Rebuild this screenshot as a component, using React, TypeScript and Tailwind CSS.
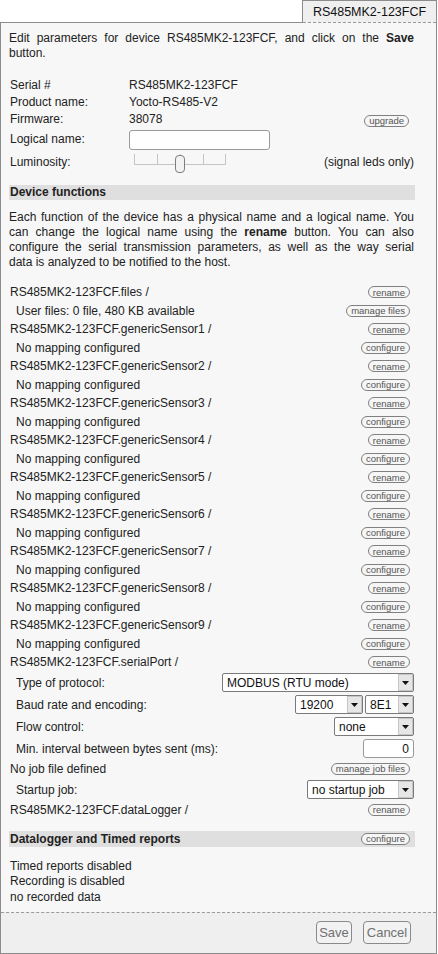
import React from "react";

function Pill({ children, className = "" }: { children: React.ReactNode; className?: string }) {
  return (
    <span
      className={
        "inline-flex h-[12px] items-center rounded-full border border-[#808080] bg-[#f6f6f6] px-[4px] text-[9.5px] leading-none text-[#555] " +
        className
      }
    >
      {children}
    </span>
  );
}

function Select({ className, value }: { className: string; value: string }) {
  return (
    <div className={"flex h-[19px] items-stretch rounded-[2px] border border-[#7a7a7a] bg-white " + className}>
      <span className="flex flex-1 items-center overflow-hidden whitespace-nowrap pl-[4px] text-[12px] leading-none text-[#111]">
        {value}
      </span>
      <span className="flex w-[15px] items-center justify-center border border-[#c6c6c6] bg-[#e6e6e6]">
        <svg width="7" height="4" viewBox="0 0 7 4">
          <path d="M0 0H7L3.5 4Z" fill="#111" />
        </svg>
      </span>
    </div>
  );
}

const functionRows: { text: string; btn: string; sub: boolean }[] = [
  { text: "RS485MK2-123FCF.files /", btn: "rename", sub: false },
  { text: "User files: 0 file, 480 KB available", btn: "manage files", sub: true },
  ...[1, 2, 3, 4, 5, 6, 7, 8, 9].flatMap((n) => [
    { text: `RS485MK2-123FCF.genericSensor${n} /`, btn: "rename", sub: false },
    { text: "No mapping configured", btn: "configure", sub: true },
  ]),
  { text: "RS485MK2-123FCF.serialPort /", btn: "rename", sub: false },
];

export default function App() {
  return (
    <div className="h-[954px] w-[438px] bg-white font-['Liberation_Sans',Arial,sans-serif] text-[12px] text-[#222]">
      {/* Tab */}
      <div className="flex h-[22px]">
        <div className="w-[302px]" />
        <div className="flex w-[135px] items-center justify-center border-x border-t border-[#8c8c8c] bg-[#efefef] pt-[1px] text-[12.5px] text-[#111]">
          RS485MK2-123FCF
        </div>
      </div>

      {/* Panel */}
      <div className="w-[437px] border-x border-b border-[#8c8c8c] bg-[#f7f7f7]">
        <div className="flex h-[1px]">
          <div className="w-[302px] bg-[#8c8c8c]" />
          <div className="flex-1 border-t border-dashed border-[#9a9a9a]" />
        </div>

        <div className="flex h-[889px] flex-col pl-[8px] pr-[21px]">
          {/* Intro */}
          <div className="mt-[8px] w-[405px] leading-[15px]">
            <div className="text-justify [text-align-last:justify]">
              Edit parameters for device RS485MK2-123FCF, and click on the <b>Save</b>
            </div>
            <div>button.</div>
          </div>

          {/* Info */}
          <div className="mt-[15px] flex flex-col">
            <div className="grid h-[17px] grid-cols-[120px_1fr] items-center">
              <span className="pl-[1px]">Serial #</span>
              <span>RS485MK2-123FCF</span>
            </div>
            <div className="grid h-[17px] grid-cols-[120px_1fr] items-center">
              <span className="pl-[1px]">Product name:</span>
              <span>Yocto-RS485-V2</span>
            </div>
            <div className="grid h-[17px] grid-cols-[120px_1fr] items-center">
              <span className="pl-[1px]">Firmware:</span>
              <span className="flex items-center justify-between">
                <span>38078</span>
                <Pill className="mr-[6px] mt-[3px]">upgrade</Pill>
              </span>
            </div>
            <div className="grid h-[24px] grid-cols-[120px_1fr] items-center">
              <span className="pl-[1px]">Logical name:</span>
              <span className="mt-[2px] h-[20px] w-[141px] rounded-[3px] border border-[#9a9a9a] bg-white" />
            </div>
            <div className="grid h-[21px] grid-cols-[120px_1fr] items-center">
              <span className="pl-[1px]">Luminosity:</span>
              <span className="flex items-center justify-between">
                <svg width="100" height="21" viewBox="0 0 100 21" className="overflow-visible">
                  <g stroke="#c4c4c4" strokeWidth="1" fill="none">
                    <path d="M5 13.5H97" />
                    <path d="M5.5 3V13.5M28.5 3V13.5M51.5 3V13.5M74.5 3V13.5M96.5 3V13.5" />
                  </g>
                  <rect x="46.5" y="4.5" width="9" height="17" rx="3.5" fill="#f2f2f2" stroke="#7d7d7d" />
                </svg>
                <span className="mr-[1px]">(signal leds only)</span>
              </span>
            </div>
          </div>

          {/* Device functions */}
          <div className="mt-[13px] h-[15px] bg-[#dfdfdf] pl-[1px] font-bold leading-[15px]">Device functions</div>

          <div className="mt-[10px] w-[405px] leading-[15px]">
            <div className="text-justify [text-align-last:justify]">
              Each function of the device has a physical name and a logical name. You
            </div>
            <div className="text-justify [text-align-last:justify]">
              can change the logical name using the <b>rename</b> button. You can also
            </div>
            <div className="text-justify [text-align-last:justify]">
              configure the serial transmission parameters, as well as the way serial
            </div>
            <div>data is analyzed to be notified to the host.</div>
          </div>

          <div className="mt-[13px] flex flex-col">
            {functionRows.map((r, i) => (
              <div key={i} className="flex h-[18.5px] items-center justify-between">
                <span className={r.sub ? "pl-[7px]" : "pl-[1px]"}>{r.text}</span>
                <Pill className="mr-[5px]">{r.btn}</Pill>
              </div>
            ))}

            <div className="flex h-[22px] items-center justify-between">
              <span className="pl-[7px]">Type of protocol:</span>
              <Select className="mr-[1px] w-[192px]" value="MODBUS (RTU mode)" />
            </div>
            <div className="flex h-[22px] items-center justify-between">
              <span className="pl-[7px]">Baud rate and encoding:</span>
              <span className="mr-[1px] flex gap-[2px]">
                <Select className="w-[68px]" value="19200" />
                <Select className="w-[49px]" value="8E1" />
              </span>
            </div>
            <div className="flex h-[22px] items-center justify-between">
              <span className="pl-[7px]">Flow control:</span>
              <Select className="mr-[1px] w-[80px]" value="none" />
            </div>
            <div className="flex h-[22px] items-center justify-between">
              <span className="pl-[7px]">Min. interval between bytes sent (ms):</span>
              <span className="mr-[1px] flex h-[19px] w-[51px] items-center justify-end rounded-[3px] border border-[#9a9a9a] bg-white pr-[4px] text-[#111]">
                0
              </span>
            </div>
            <div className="flex h-[19px] items-center justify-between">
              <span className="pl-[1px]">No job file defined</span>
              <Pill className="mr-[5px]">manage job files</Pill>
            </div>
            <div className="flex h-[22px] items-center justify-between">
              <span className="pl-[7px]">Startup job:</span>
              <Select className="mr-[1px] w-[107px]" value="no startup job" />
            </div>
            <div className="flex h-[19px] items-center justify-between">
              <span className="pl-[1px]">RS485MK2-123FCF.dataLogger /</span>
              <Pill className="mr-[5px]">rename</Pill>
            </div>
          </div>

          {/* Datalogger */}
          <div className="mt-[11.5px] flex h-[16px] items-center justify-between bg-[#dfdfdf] pl-[1px]">
            <span className="font-bold">Datalogger and Timed reports</span>
            <Pill className="mr-[5px]">configure</Pill>
          </div>
          <div className="mt-[11.5px] pl-[1px] leading-[15.5px]">
            <div>Timed reports disabled</div>
            <div>Recording is disabled</div>
            <div>no recorded data</div>
          </div>
        </div>

        {/* Footer */}
        <div className="flex h-[41px] items-start justify-end gap-[11px] border-t border-dashed border-[#9a9a9a] bg-[#efefef] pr-[25px] pt-[8px]">
          <span className="flex h-[23px] w-[36px] items-center justify-center rounded-[4px] border border-[#8a8a8a] bg-[#f2f2f2] text-[13px] text-[#707070]">
            Save
          </span>
          <span className="flex h-[23px] w-[48px] items-center justify-center rounded-[4px] border border-[#8a8a8a] bg-[#f2f2f2] text-[13px] text-[#707070]">
            Cancel
          </span>
        </div>
      </div>
    </div>
  );
}
